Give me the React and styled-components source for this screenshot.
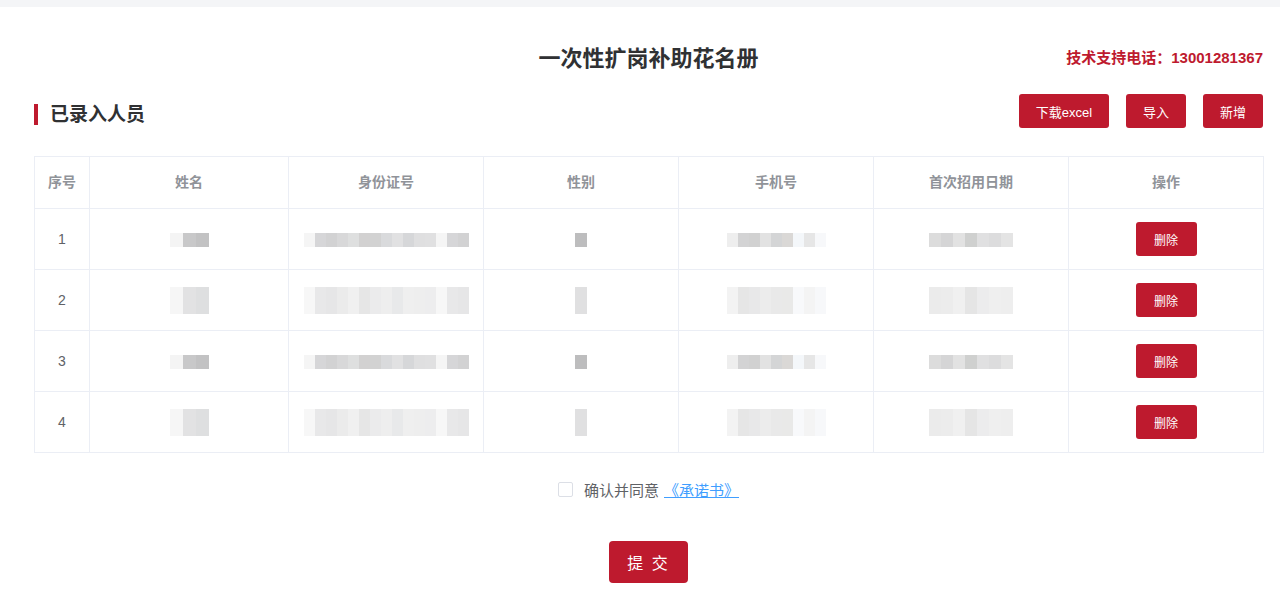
import React, { useState } from 'react';
import styled, { createGlobalStyle } from 'styled-components';

const GlobalStyle = createGlobalStyle`
  html, body {
    margin: 0;
    padding: 0;
    background: #ffffff;
    font-family: "Liberation Sans", "Noto Sans CJK SC", sans-serif;
  }
`;

// masked data: each cell is a list of greys, drawn as a pixelated strip
const light = ['#f4f4f4', '#c8c8c9', '#c2c2c3'];
const soft = ['#f6f6f6', '#e2e2e3', '#dedfe0'];
const idLine = ['#f5f5f5', '#d6d6d8', '#d2d2d3', '#d8d8d9', '#dedfdf', '#d2d1d1', '#d2d2d2', '#d9dadc', '#e1e1e2', '#d6d7d9', '#dfdfe0', '#e0e0e1'];
const idSoft = ['#f7f7f7', '#e8e8e9', '#e6e6e7', '#ebebeb', '#f0f0f0', '#e6e6e6', '#ebebec', '#eeeeee', '#e8e9ea', '#efefef', '#eeeeee', '#ededee'];
const phoneLine = ['#eeeeee', '#d3d3d4', '#d1d1d1', '#e2e2e2', '#d4d5d6', '#dad8d6', '#f4f7fa'];
const phoneSoft = ['#f3f3f3', '#e6e6e6', '#e8e8e9', '#ececec', '#e9e9e9', '#e9e9e8', '#f8f9fb'];
const dateLine = ['#dcdcdc', '#d5d5d6', '#e2e2e2', '#cfd0cf', '#e0e0e1', '#dcdcdd'];
const dateSoft = ['#ebebeb', '#ececec', '#f0f0f0', '#e5e5e5', '#ececed', '#efefef'];

const rows = [
  { no: 1, tall: false },
  { no: 2, tall: true },
  { no: 3, tall: false },
  { no: 4, tall: true },
];

const Mosaic = ({ cells, tall, cellWidth = 11 }) => (
  <MosaicBox>
    <MosaicRow>
      {cells.map((c, i) => (
        <Cell key={i} $w={cellWidth} $h={14} style={{ background: c }} />
      ))}
    </MosaicRow>
    {tall && (
      <MosaicRow>
        {cells.map((c, i) => (
          <Cell key={i} $w={cellWidth} $h={13} style={{ background: c }} />
        ))}
      </MosaicRow>
    )}
  </MosaicBox>
);

export default function App() {
  const [agree, setAgree] = useState(false);

  return (
    <>
      <GlobalStyle />
      <TopStrip />
      <Page>
        <TitleRow>
          <Title>一次性扩岗补助花名册</Title>
          <Hotline>技术支持电话：13001281367</Hotline>
        </TitleRow>

        <SectionRow>
          <SectionTitle>已录入人员</SectionTitle>
          <Actions>
            <RedButton $w={90}>下载excel</RedButton>
            <RedButton $w={60}>导入</RedButton>
            <RedButton $w={60}>新增</RedButton>
          </Actions>
        </SectionRow>

        <Table>
          <colgroup>
            <col style={{ width: 55 }} />
            <col style={{ width: 199 }} />
            <col style={{ width: 195 }} />
            <col style={{ width: 195 }} />
            <col style={{ width: 195 }} />
            <col style={{ width: 195 }} />
            <col style={{ width: 195 }} />
          </colgroup>
          <thead>
            <tr>
              <Th>序号</Th>
              <Th>姓名</Th>
              <Th>身份证号</Th>
              <Th>性别</Th>
              <Th>手机号</Th>
              <Th>首次招用日期</Th>
              <Th>操作</Th>
            </tr>
          </thead>
          <tbody>
            {rows.map((r) => (
              <tr key={r.no}>
                <Td>{r.no}</Td>
                <Td>
                  <Mosaic cells={r.tall ? soft : light} tall={r.tall} cellWidth={13} />
                </Td>
                <Td>
                  <Mosaic cells={[...(r.tall ? idSoft : idLine), ...(r.tall ? idSoft : idLine).slice(0, 3)]} tall={r.tall} />
                </Td>
                <Td>
                  <Mosaic cells={[r.tall ? '#e0e0e1' : '#bdbdbe']} tall={r.tall} cellWidth={12} />
                </Td>
                <Td>
                  <Mosaic cells={[...(r.tall ? phoneSoft : phoneLine), r.tall ? '#f4f4f4' : '#e6e6e6', '#f7f8fa']} tall={r.tall} cellWidth={11} />
                </Td>
                <Td>
                  <Mosaic cells={[...(r.tall ? dateSoft : dateLine), r.tall ? '#eeeeee' : '#e4e4e4']} tall={r.tall} cellWidth={12} />
                </Td>
                <Td>
                  <SmallRedButton>删除</SmallRedButton>
                </Td>
              </tr>
            ))}
          </tbody>
        </Table>

        <AgreeRow>
          <Check type="checkbox" checked={agree} onChange={(e) => setAgree(e.target.checked)} />
          <AgreeText>确认并同意</AgreeText>
          <PledgeLink href="#">《承诺书》</PledgeLink>
        </AgreeRow>

        <SubmitRow>
          <SubmitButton>提 交</SubmitButton>
        </SubmitRow>
      </Page>
    </>
  );
}

const TopStrip = styled.div`
  height: 7px;
  background: #f4f5f7;
`;
const Page = styled.div`
  padding: 0 17px 0 34px;
`;
const TitleRow = styled.div`
  position: relative;
  height: 58px;
  margin-top: 20px;
  display: flex;
  justify-content: center;
  align-items: center;
`;
const Title = styled.h1`
  margin: 0;
  font-size: 22px;
  font-weight: bold;
  color: #303133;
`;
const Hotline = styled.span`
  position: absolute;
  right: 0;
  top: 50%;
  transform: translateY(-50%);
  font-size: 15px;
  font-weight: bold;
  color: #be1a2e;
`;
const SectionRow = styled.div`
  display: flex;
  justify-content: space-between;
  align-items: center;
  margin-top: 9px;
`;
const SectionTitle = styled.h2`
  margin: 7px 0 0;
  padding-left: 12px;
  border-left: 4px solid #be1a2e;
  line-height: 21px;
  font-size: 19px;
  font-weight: bold;
  color: #303133;
`;
const Actions = styled.div`
  display: flex;
  gap: 17px;
`;
const RedButton = styled.button`
  width: ${(p) => p.$w}px;
  height: 34px;
  border: none;
  border-radius: 3px;
  background: #be1a2e;
  color: #ffffff;
  font-family: inherit;
  font-size: 13px;
  cursor: pointer;
`;
const Table = styled.table`
  margin-top: 28px;
  width: 100%;
  border-collapse: collapse;
  table-layout: fixed;
  border: 1px solid #ebeef5;
`;
const Th = styled.th`
  height: 51px;
  border: 1px solid #ebeef5;
  font-size: 14px;
  font-weight: bold;
  color: #909399;
  text-align: center;
  padding: 0;
  line-height: 51px;
  vertical-align: top;
`;
const Td = styled.td`
  height: 60px;
  border: 1px solid #ebeef5;
  font-size: 14px;
  color: #606266;
  text-align: center;
  padding: 0;
`;
const MosaicBox = styled.div`
  display: inline-flex;
  flex-direction: column;
  vertical-align: middle;
  filter: blur(0.3px);
`;
const MosaicRow = styled.div`
  display: flex;
`;
const Cell = styled.span`
  display: block;
  width: ${(p) => p.$w}px;
  height: ${(p) => p.$h}px;
`;
const SmallRedButton = styled.button`
  width: 61px;
  height: 34px;
  border: none;
  border-radius: 3px;
  background: #be1a2e;
  color: #ffffff;
  font-family: inherit;
  font-size: 12px;
  cursor: pointer;
`;
const AgreeRow = styled.div`
  margin-top: 27px;
  display: flex;
  justify-content: center;
  align-items: center;
  height: 18px;
  font-size: 15px;
`;
const Check = styled.input`
  appearance: none;
  width: 15px;
  height: 15px;
  margin: 0 11px 0 0;
  border: 1px solid #dcdfe6;
  border-radius: 2px;
  background: #ffffff;
  cursor: pointer;
  &:checked {
    background: #be1a2e;
    border-color: #be1a2e;
  }
`;
const AgreeText = styled.span`
  color: #606266;
`;
const PledgeLink = styled.a`
  margin-left: 5px;
  color: #409eff;
  text-decoration: underline;
`;
const SubmitRow = styled.div`
  display: flex;
  justify-content: center;
  margin-top: 43px;
  padding-bottom: 15px;
`;
const SubmitButton = styled.button`
  width: 79px;
  height: 42px;
  border: none;
  border-radius: 4px;
  background: #be1a2e;
  color: #ffffff;
  font-family: inherit;
  font-size: 16px;
  letter-spacing: 2px;
  cursor: pointer;
`;
